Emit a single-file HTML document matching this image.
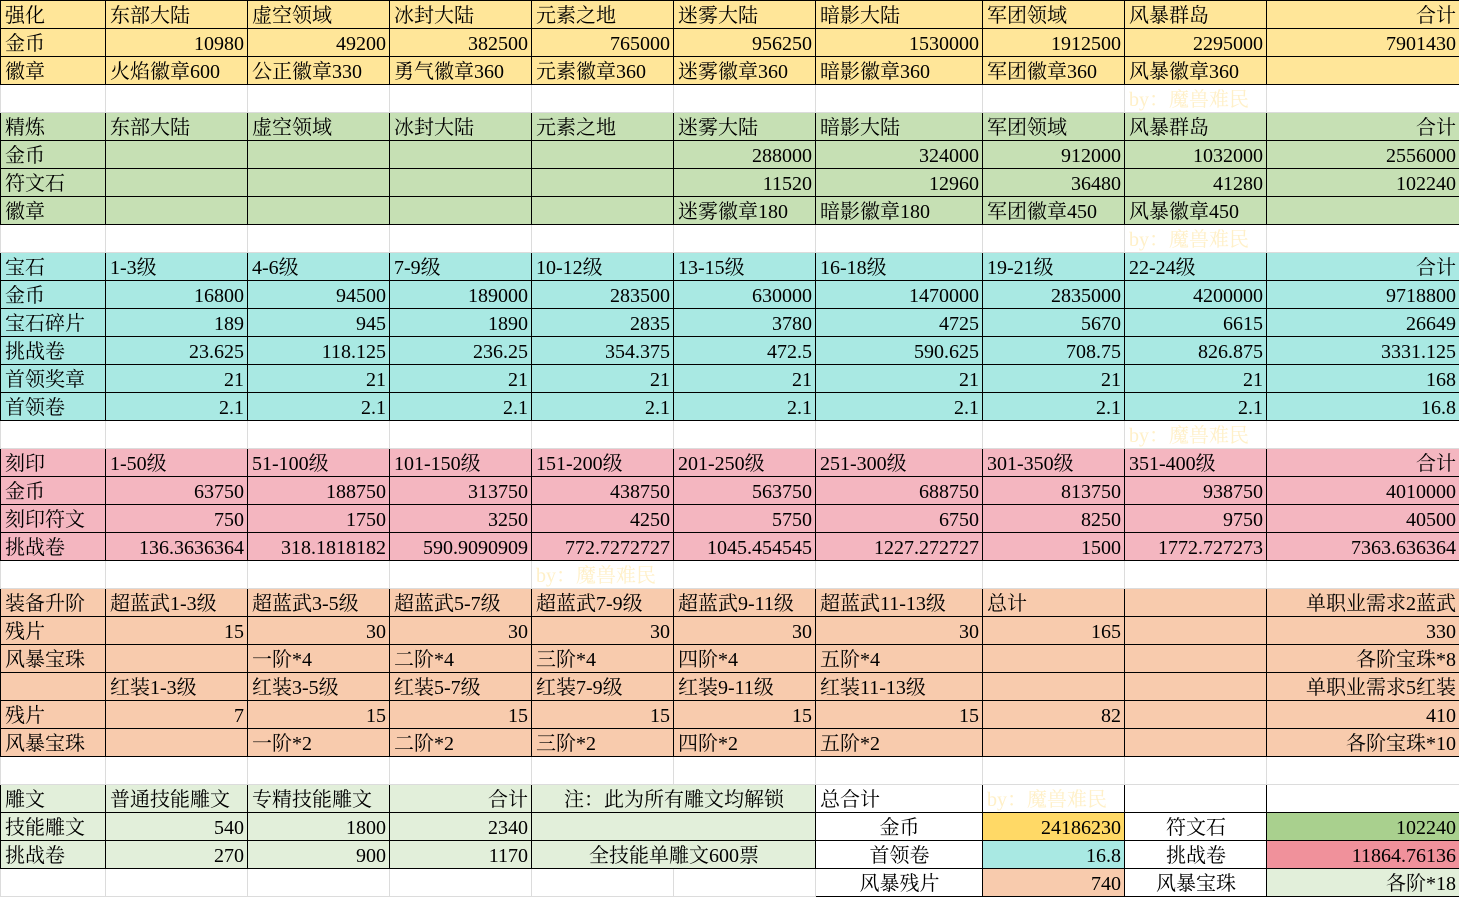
<!DOCTYPE html>
<html><head><meta charset="utf-8"><style>
body{margin:0;background:#fff;}
table{border-collapse:collapse;table-layout:fixed;width:1459px;font-family:"Liberation Serif","Noto Serif CJK SC",serif;font-size:20px;color:#000;}
td{height:28px;box-sizing:border-box;padding:3px 3px 0 4px;border:1px solid #000;white-space:nowrap;overflow:visible;line-height:24px;}
td.r{text-align:right;}
td.c{text-align:center;}
tr.b td{border:1px solid #dcdcdc;border-top-color:#000;}
tr.y td{background:#FFE699}
tr.g td{background:#C6E0B4}
tr.t td{background:#A9E9E3}
tr.p td{background:#F4B6C0}
tr.o td{background:#F8CBAD}
td.w{color:#FFF0C8}
td.lg{background:#E2EFDA}
td.wh{background:#fff}
td.n{border:1px solid #dcdcdc}
</style></head><body>
<table>
<colgroup><col style="width:105px"><col style="width:142px"><col style="width:142px"><col style="width:142px"><col style="width:142px"><col style="width:142px"><col style="width:167px"><col style="width:142px"><col style="width:142px"><col style="width:193px"></colgroup>
<tr class="y"><td>强化</td><td>东部大陆</td><td>虚空领域</td><td>冰封大陆</td><td>元素之地</td><td>迷雾大陆</td><td>暗影大陆</td><td>军团领域</td><td>风暴群岛</td><td class="r">合计</td></tr>
<tr class="y"><td>金币</td><td class="r">10980</td><td class="r">49200</td><td class="r">382500</td><td class="r">765000</td><td class="r">956250</td><td class="r">1530000</td><td class="r">1912500</td><td class="r">2295000</td><td class="r">7901430</td></tr>
<tr class="y"><td>徽章</td><td>火焰徽章600</td><td>公正徽章330</td><td>勇气徽章360</td><td>元素徽章360</td><td>迷雾徽章360</td><td>暗影徽章360</td><td>军团徽章360</td><td>风暴徽章360</td><td></td></tr>
<tr class="b"><td></td><td></td><td></td><td></td><td></td><td></td><td></td><td></td><td class="w">by：魔兽难民</td><td></td></tr>
<tr class="g"><td>精炼</td><td>东部大陆</td><td>虚空领域</td><td>冰封大陆</td><td>元素之地</td><td>迷雾大陆</td><td>暗影大陆</td><td>军团领域</td><td>风暴群岛</td><td class="r">合计</td></tr>
<tr class="g"><td>金币</td><td></td><td></td><td></td><td></td><td class="r">288000</td><td class="r">324000</td><td class="r">912000</td><td class="r">1032000</td><td class="r">2556000</td></tr>
<tr class="g"><td>符文石</td><td></td><td></td><td></td><td></td><td class="r">11520</td><td class="r">12960</td><td class="r">36480</td><td class="r">41280</td><td class="r">102240</td></tr>
<tr class="g"><td>徽章</td><td></td><td></td><td></td><td></td><td>迷雾徽章180</td><td>暗影徽章180</td><td>军团徽章450</td><td>风暴徽章450</td><td></td></tr>
<tr class="b"><td></td><td></td><td></td><td></td><td></td><td></td><td></td><td></td><td class="w">by：魔兽难民</td><td></td></tr>
<tr class="t"><td>宝石</td><td>1-3级</td><td>4-6级</td><td>7-9级</td><td>10-12级</td><td>13-15级</td><td>16-18级</td><td>19-21级</td><td>22-24级</td><td class="r">合计</td></tr>
<tr class="t"><td>金币</td><td class="r">16800</td><td class="r">94500</td><td class="r">189000</td><td class="r">283500</td><td class="r">630000</td><td class="r">1470000</td><td class="r">2835000</td><td class="r">4200000</td><td class="r">9718800</td></tr>
<tr class="t"><td>宝石碎片</td><td class="r">189</td><td class="r">945</td><td class="r">1890</td><td class="r">2835</td><td class="r">3780</td><td class="r">4725</td><td class="r">5670</td><td class="r">6615</td><td class="r">26649</td></tr>
<tr class="t"><td>挑战卷</td><td class="r">23.625</td><td class="r">118.125</td><td class="r">236.25</td><td class="r">354.375</td><td class="r">472.5</td><td class="r">590.625</td><td class="r">708.75</td><td class="r">826.875</td><td class="r">3331.125</td></tr>
<tr class="t"><td>首领奖章</td><td class="r">21</td><td class="r">21</td><td class="r">21</td><td class="r">21</td><td class="r">21</td><td class="r">21</td><td class="r">21</td><td class="r">21</td><td class="r">168</td></tr>
<tr class="t"><td>首领卷</td><td class="r">2.1</td><td class="r">2.1</td><td class="r">2.1</td><td class="r">2.1</td><td class="r">2.1</td><td class="r">2.1</td><td class="r">2.1</td><td class="r">2.1</td><td class="r">16.8</td></tr>
<tr class="b"><td></td><td></td><td></td><td></td><td></td><td></td><td></td><td></td><td class="w">by：魔兽难民</td><td></td></tr>
<tr class="p"><td>刻印</td><td>1-50级</td><td>51-100级</td><td>101-150级</td><td>151-200级</td><td>201-250级</td><td>251-300级</td><td>301-350级</td><td>351-400级</td><td class="r">合计</td></tr>
<tr class="p"><td>金币</td><td class="r">63750</td><td class="r">188750</td><td class="r">313750</td><td class="r">438750</td><td class="r">563750</td><td class="r">688750</td><td class="r">813750</td><td class="r">938750</td><td class="r">4010000</td></tr>
<tr class="p"><td>刻印符文</td><td class="r">750</td><td class="r">1750</td><td class="r">3250</td><td class="r">4250</td><td class="r">5750</td><td class="r">6750</td><td class="r">8250</td><td class="r">9750</td><td class="r">40500</td></tr>
<tr class="p"><td>挑战卷</td><td class="r">136.3636364</td><td class="r">318.1818182</td><td class="r">590.9090909</td><td class="r">772.7272727</td><td class="r">1045.454545</td><td class="r">1227.272727</td><td class="r">1500</td><td class="r">1772.727273</td><td class="r">7363.636364</td></tr>
<tr class="b"><td></td><td></td><td></td><td></td><td class="w">by：魔兽难民</td><td></td><td></td><td></td><td></td><td></td></tr>
<tr class="o"><td>装备升阶</td><td>超蓝武1-3级</td><td>超蓝武3-5级</td><td>超蓝武5-7级</td><td>超蓝武7-9级</td><td>超蓝武9-11级</td><td>超蓝武11-13级</td><td>总计</td><td></td><td class="r">单职业需求2蓝武</td></tr>
<tr class="o"><td>残片</td><td class="r">15</td><td class="r">30</td><td class="r">30</td><td class="r">30</td><td class="r">30</td><td class="r">30</td><td class="r">165</td><td></td><td class="r">330</td></tr>
<tr class="o"><td>风暴宝珠</td><td></td><td>一阶*4</td><td>二阶*4</td><td>三阶*4</td><td>四阶*4</td><td>五阶*4</td><td></td><td></td><td class="r">各阶宝珠*8</td></tr>
<tr class="o"><td></td><td>红装1-3级</td><td>红装3-5级</td><td>红装5-7级</td><td>红装7-9级</td><td>红装9-11级</td><td>红装11-13级</td><td></td><td></td><td class="r">单职业需求5红装</td></tr>
<tr class="o"><td>残片</td><td class="r">7</td><td class="r">15</td><td class="r">15</td><td class="r">15</td><td class="r">15</td><td class="r">15</td><td class="r">82</td><td></td><td class="r">410</td></tr>
<tr class="o"><td>风暴宝珠</td><td></td><td>一阶*2</td><td>二阶*2</td><td>三阶*2</td><td>四阶*2</td><td>五阶*2</td><td></td><td></td><td class="r">各阶宝珠*10</td></tr>
<tr class="b"><td></td><td></td><td></td><td></td><td></td><td></td><td></td><td></td><td></td><td></td></tr>
<tr><td class="lg">雕文</td><td class="lg">普通技能雕文</td><td class="lg">专精技能雕文</td><td class="lg r">合计</td><td class="lg c" colspan="2">注：此为所有雕文均解锁</td><td>总合计</td><td class="w">by：魔兽难民</td><td></td><td></td></tr>
<tr><td class="lg">技能雕文</td><td class="lg r">540</td><td class="lg r">1800</td><td class="lg r">2340</td><td class="lg" colspan="2"></td><td class="c">金币</td><td class="r" style="background:#FFD966">24186230</td><td class="c">符文石</td><td class="r" style="background:#A9D08E">102240</td></tr>
<tr><td class="lg">挑战卷</td><td class="lg r">270</td><td class="lg r">900</td><td class="lg r">1170</td><td class="lg c" colspan="2">全技能单雕文600票</td><td class="c">首领卷</td><td class="r" style="background:#A9E9E3">16.8</td><td class="c">挑战卷</td><td class="r" style="background:#F0919B">11864.76136</td></tr>
<tr><td class="n"></td><td class="n"></td><td class="n"></td><td class="n"></td><td class="n"></td><td class="n"></td><td class="c">风暴残片</td><td class="r" style="background:#F8CBAD">740</td><td class="c">风暴宝珠</td><td class="r" style="background:#E2EFDA">各阶*18</td></tr>
</table>
</body></html>
